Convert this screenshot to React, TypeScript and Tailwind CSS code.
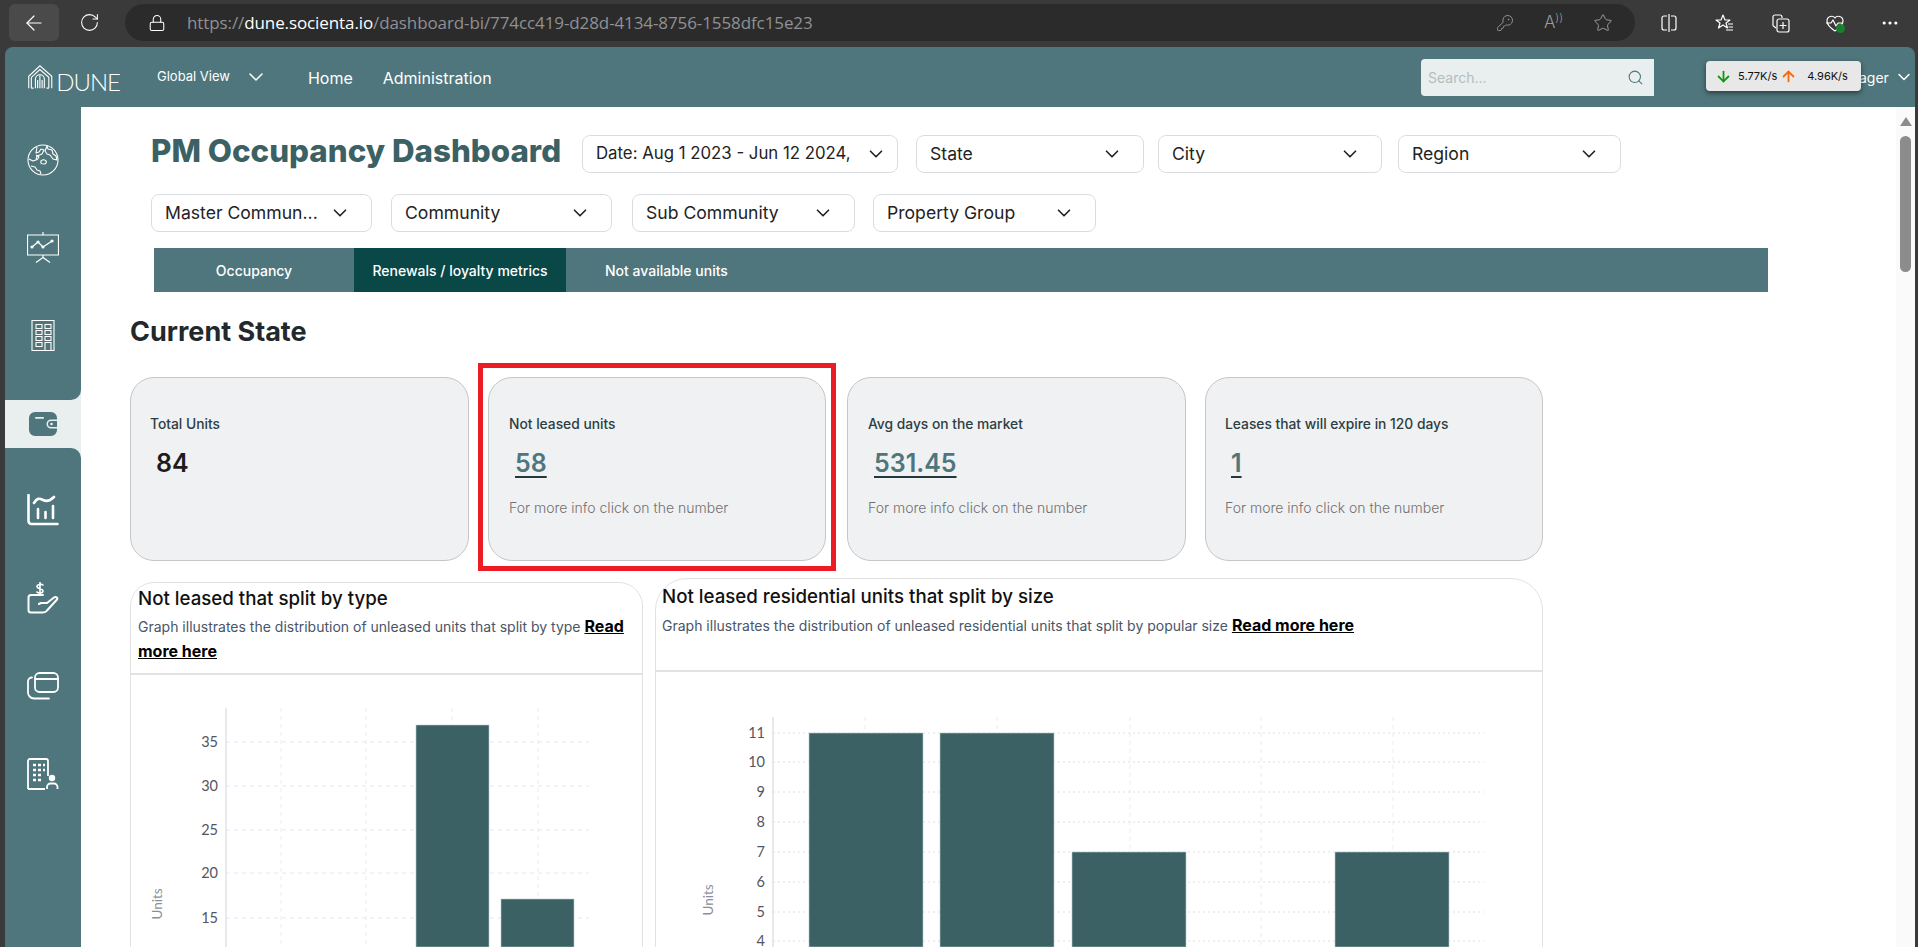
import { ArrowDown, ArrowLeft, ArrowUp, ChevronDown, Ellipsis, KeyRound, Lock, RotateCw, Search, Star } from 'lucide-react';

const TEAL = '#4f767c';
const BAR = '#3b6165';

function Select({ label, className }: { label: string; className: string }) {
  return (
    <div className={`flex h-[38px] shrink-0 items-center justify-between rounded-lg border border-[#d9dde2] bg-white pl-[13px] pr-[20px] text-[17.6px] text-[#222] ${className}`}>
      <span className="truncate">{label}</span>
      <ChevronDown className="ml-1 h-[22px] w-[22px] shrink-0 text-[#222]" strokeWidth={1.8} />
    </div>
  );
}

function StatCard({ label, value, linked, className }: { label: string; value: string; linked?: boolean; className: string }) {
  return (
    <div className={`h-[184px] shrink-0 rounded-[24px] border border-[#c6c6c6] bg-[#f0f1f3] pt-[37px] ${className}`}>
      <div className="text-[13.8px] font-medium leading-[18px] text-[#2c3e42]">{label}</div>
      {linked ? (
        <a className="ml-[6px] mt-[15px] inline-block text-[25px] font-semibold leading-[30px] text-[#4f767c] underline decoration-[#23393c] underline-offset-4">{value}</a>
      ) : (
        <div className="ml-[6px] mt-[15px] text-[25px] font-semibold leading-[30px] text-[#1c1c1c]">{value}</div>
      )}
      {linked && <div className="mt-[21px] text-[14px] font-light leading-[18px] text-[#707070]">For more info click on the number</div>}
    </div>
  );
}

function Chart({ box, ticks, tickX, axisX, axisTop, gridEnd, vLines, bars, unitsX, unitsY, dotted }: {
  box: string;
  ticks: [string, number][];
  tickX: number;
  axisX: number;
  axisTop: number;
  gridEnd: number;
  vLines: number[];
  bars: [number, number, number][];
  unitsX: number;
  unitsY: number;
  dotted?: boolean;
}) {
  return (
    <svg viewBox={box} className="block h-full w-full" fontFamily="Lato, sans-serif">
      {vLines.map((x) => (
        <line key={x} x1={x} x2={x} y1={axisTop} y2={947} stroke="#ececf0" strokeDasharray="4 4" />
      ))}
      {ticks.map(([t, y]) => (
        <g key={t}>
          <line x1={axisX} x2={gridEnd} y1={y} y2={y} stroke={dotted ? '#dfdfe3' : '#e8e8ec'} strokeDasharray={dotted ? '2 3' : '4 4'} />
          <text x={tickX} y={y + 5} textAnchor="end" fontSize="14.5" fill="#55555f">{t}</text>
        </g>
      ))}
      <line x1={axisX} x2={axisX} y1={axisTop} y2={947} stroke="#e0e0ea" strokeWidth="1.5" />
      {bars.map(([x, w, y]) => (
        <rect key={x} x={x} y={y} width={w} height={947 - y} fill={BAR} stroke="#b9cccd" strokeWidth="0.6" />
      ))}
      <text transform={`translate(${unitsX} ${unitsY}) rotate(-90)`} textAnchor="middle" fontSize="13.5" fill="#8b8f9a">Units</text>
    </svg>
  );
}

function Logo() {
  return (
    <div className="flex h-[32px] w-[92px] items-end text-white">
      <svg viewBox="0 0 34 32" className="h-[32px] w-[34px]" fill="none" stroke="currentColor" strokeWidth="1.5">
        <path d="M1 31V15L16 1l16 14v16" />
        <path d="M4.5 31V16.5L16 6l12 10.5V31" />
        <path d="M10 31V19a6 6 0 0 1 12 0v12M13 31V20M16 31V14M19 31V20" />
        <path d="M4.5 31h3M25 31h3" />
      </svg>
      <span className="ml-[3px] text-[24px] font-light leading-[22px] tracking-[-1px]" style={{ fontFamily: 'Lato, sans-serif' }}>DUNE</span>
    </div>
  );
}

const navIcon = 'h-[32px] w-[32px] text-white';

function GlobeIcon() {
  return (
    <svg viewBox="0 0 32 32" className={navIcon} fill="none" stroke="currentColor" strokeWidth="1.1" strokeLinejoin="round">
      <circle cx="16" cy="16" r="15" />
      <path d="M2 15l4 2 3-1 1-4 5-2 2-4-3-1-2 3-3 1 1-6" />
      <path d="M20 2l1 3 4 1 1 4 3 2 1 4-4-1-3-4-3-1-2-3z" />
      <path d="M4 22l4 1 2 3 3 1 1 3" />
      <path d="M14 17c2-2 4-1 5 0s0 3-2 3-4 0-3-3zM9 11l3 2-2 3" />
    </svg>
  );
}

function BoardIcon() {
  return (
    <svg viewBox="0 0 32 32" className={navIcon} fill="none" stroke="currentColor" strokeWidth="1.2" strokeLinejoin="round">
      <path d="M16 0v3M0.5 3h31v20H.5zM16 23v3M9 30.500l7-5 7 5" />
      <path d="M5 15l6-5 5 5 9-6" />
      <circle cx="5" cy="15" r="1" fill="currentColor" />
      <circle cx="11" cy="10" r="1" fill="currentColor" />
      <circle cx="16" cy="15" r="1" fill="currentColor" />
      <circle cx="25" cy="9" r="1" fill="currentColor" />
    </svg>
  );
}

function BuildingIcon() {
  return (
    <svg viewBox="0 0 32 32" className={navIcon} fill="none" stroke="currentColor" strokeWidth="1.1">
      <path d="M5 .5h22v30H5z" />
      <path d="M9 4.500h6v4H9zM18 4.500h6v4h-6zM9 10.500h6v4H9zM18 10.500h6v4h-6zM9 16.500h6v4H9zM18 16.500h6v4h-6zM9 22.500h6v4H9zM18 22.500h6v8h-6z" />
    </svg>
  );
}

function WalletIcon() {
  return (
    <svg viewBox="0 0 28 24" className="h-[24px] w-[28px]">
      <path fill={TEAL} d="M6 0h16a6 6 0 0 1 6 6v1.500h-6a4.500 4.500 0 0 0 0 9h6V18a6 6 0 0 1-6 6H6a6 6 0 0 1-6-6V6a6 6 0 0 1 6-6z" />
      <path fill={TEAL} d="M22 9h6v6h-6a3 3 0 0 1 0-6z" />
      <rect x="6" y="5" width="9" height="1.800" rx="0.900" fill="#e9efef" />
      <circle cx="22.500" cy="12" r="1.300" fill="#e9efef" />
    </svg>
  );
}

function StatsIcon() {
  return (
    <svg viewBox="0 0 32 32" className={navIcon} fill="none" stroke="currentColor" strokeWidth="2.600" strokeLinecap="round" strokeLinejoin="round">
      <path d="M1.500 1v26a3 3 0 0 0 3 3h26" />
      <path d="M7 9c3-5 5-5 9-3s7 1 11-3M11 15v9M18.500 18v6M26 12v12" />
    </svg>
  );
}

function HandIcon() {
  return (
    <svg viewBox="0 0 32 32" className={navIcon} fill="none" stroke="currentColor" strokeWidth="2" strokeLinecap="round" strokeLinejoin="round">
      <path d="M16 13H4a2.500 2.500 0 0 0-2.500 2.500V28A2.500 2.500 0 0 0 4 30.500h12c2 0 3-.5 4-2l10-11c1-1.500-1-3.500-3-2l-7 5.500h-6l-2 1" />
      <path d="M16 3c-1-1-6-1-6 1.500S16 6.500 16 9c0 2.500-5 2.500-6 1M13 0v13" strokeWidth="1.600" />
    </svg>
  );
}

function CardsIcon() {
  return (
    <svg viewBox="0 0 32 28" className="h-[28px] w-[32px] text-white" fill="none" stroke="currentColor" strokeWidth="1.800" strokeLinecap="round" strokeLinejoin="round">
      <rect x="8" y="1" width="23" height="19" rx="4.500" />
      <path d="M8 7h23M5 5.500A4 4 0 0 0 1 9.500v11A6 6 0 0 0 7 26.500h15" />
    </svg>
  );
}

function TenantIcon() {
  return (
    <svg viewBox="0 0 32 32" className={navIcon} fill="none" stroke="currentColor" strokeWidth="1.800">
      <path d="M1 31V3a2 2 0 0 1 2-2h16a2 2 0 0 1 2 2v15M1 31h17" />
      <path d="M6 7h3M11 7h3M16 7h2M6 12h3M11 12h3M16 12h2M6 17h3M11 17h3M6 22h3M11 22h3" strokeWidth="2.400" />
      <circle cx="25" cy="20" r="3.200" fill="currentColor" stroke="none" />
      <path d="M20 31v-2a3.500 3.500 0 0 1 3.500-3.500h3.500a3.500 3.500 0 0 1 3.500 3.500v2" />
    </svg>
  );
}

function SplitIcon() {
  return (
    <svg viewBox="0 0 20 20" className="h-5 w-5 text-white" fill="none" stroke="currentColor" strokeWidth="1.200">
      <path d="M8 3H5a2 2 0 0 0-2 2v10a2 2 0 0 0 2 2h3M12 3h3a2 2 0 0 1 2 2v10a2 2 0 0 1-2 2h-3M10 1v18" />
    </svg>
  );
}

function FavIcon() {
  return (
    <svg viewBox="0 0 20 20" className="h-5 w-5 text-white" fill="none" stroke="currentColor" strokeWidth="1.200" strokeLinejoin="round">
      <path d="M9 2l2 5h5l-4 3 1.500 5L9 12l-4.500 3L6 10 2 7h5zM14 11h5M14.500 14h4.500M12 17h7" />
    </svg>
  );
}

function CollectIcon() {
  return (
    <svg viewBox="0 0 20 20" className="h-5 w-5 text-white" fill="none" stroke="currentColor" strokeWidth="1.200">
      <path d="M6 15l-2.500-2a2 2 0 0 1-.5-2V4a2 2 0 0 1 2-2h5a2 2 0 0 1 2 2v1" />
      <rect x="7" y="6" width="12" height="13" rx="2" />
      <path d="M13 9v7M9.500 12.500h7" />
    </svg>
  );
}

function HeartIcon() {
  return (
    <div className="relative h-5 w-5 text-white">
      <svg viewBox="0 0 20 20" className="h-5 w-5" fill="none" stroke="currentColor" strokeWidth="1.200" strokeLinejoin="round">
        <path d="M10 5c-2-3-8-2-8 3 0 3 2 6 8 10 6-4 8-7 8-10 0-5-6-6-8-3zM1 10h5l2-3 3 6 2-3h5" />
      </svg>
      <span className="absolute bottom-0 right-0 h-[9px] w-[9px] rounded-full bg-[#1a7f2e]" />
    </div>
  );
}

export default function App() {
  return (
    <div className="relative flex h-[947px] w-[1918px] flex-col overflow-hidden bg-[#3a3a3a]" style={{ fontFamily: 'Inter, sans-serif' }}>
      {/* browser toolbar */}
      <div className="flex h-[47px] shrink-0 items-start pl-[9px] pt-[4px]">
        <div className="flex h-[37px] w-[50px] items-center justify-center rounded-md bg-[#4a4a4a]">
          <ArrowLeft className="h-6 w-6 text-white" strokeWidth={1.2} />
        </div>
        <div className="flex h-[37px] w-[66px] items-center pl-[20px]">
          <RotateCw className="h-[21px] w-[21px] text-white" strokeWidth={1.2} />
        </div>
        <div className="flex h-[37px] w-[1510px] items-center rounded-full bg-[#2b2b2b] pl-[23px] pr-[22px]">
          <Lock className="h-[18px] w-[18px] text-white" strokeWidth={1.4} />
          <span className="ml-[21px] flex-1 text-[17px] tracking-[-0.1px] text-[#8f9194]" style={{ fontFamily: '"Open Sans", sans-serif' }}>
            https://<span className="text-white">dune.socienta.io</span>/dashboard-bi/774cc419-d28d-4134-8756-1558dfc15e23
          </span>
          <KeyRound className="h-[18px] w-[18px] text-[#9a9a9a]" strokeWidth={1.2} />
          <span className="ml-[30px] text-[17px] font-light text-[#9a9a9a]">A<span className="text-[11px] align-super">))</span></span>
          <Star className="ml-[30px] h-5 w-5 text-[#9a9a9a]" strokeWidth={1.2} />
        </div>
        <div className="flex h-[37px] flex-1 items-center justify-between pl-[24px] pr-[18px]">
          <SplitIcon />
          <FavIcon />
          <CollectIcon />
          <HeartIcon />
          <Ellipsis className="h-5 w-5 text-white" strokeWidth={1.800} />
        </div>
      </div>

      {/* app */}
      <div className="ml-[5px] mr-[3px] flex min-h-0 flex-1 flex-col overflow-hidden rounded-t-lg bg-[#4f767c]">
        <header className="flex h-[60px] shrink-0 items-center pl-[23px] text-white">
          <Logo />
          <div className="ml-[37px] text-[13px]">Global View</div>
          <ChevronDown className="ml-[14px] h-6 w-6" strokeWidth={1.500} />
          <nav className="ml-[40px] mt-[2px] flex gap-[30px] text-[16px]">
            <span>Home</span>
            <span>Administration</span>
          </nav>
          <div className="ml-auto flex h-[37px] w-[233px] items-center justify-between rounded-l bg-[#e9efef] pl-[7px] pr-[10px] text-[14px] text-[#b7bcbc]">
            <span>Search...</span>
            <Search className="h-[17px] w-[17px] text-[#4f767c]" strokeWidth={1.500} />
          </div>
          <span className="ml-[205px] w-[27px] text-right text-[14px]">ager</span>
          <ChevronDown className="ml-[8px] mr-[1px] h-5 w-5 shrink-0" strokeWidth={1.800} />
        </header>

        <div className="flex min-h-0 flex-1">
          <aside className="flex w-[76px] shrink-0 flex-col pt-[9px]">
            <div className="flex h-[88px] items-center justify-center"><GlobeIcon /></div>
            <div className="flex h-[88px] items-center justify-center"><BoardIcon /></div>
            <div className="flex h-[88px] items-center justify-center"><BuildingIcon /></div>
            <div className="relative mt-[20px] flex h-[48px] items-center justify-center bg-[#e9efef]">
              <div className="absolute -top-[10px] right-0 h-[10px] w-[10px] bg-[#e9efef]"><div className="h-full w-full rounded-br-[10px] bg-[#4f767c]" /></div>
              <WalletIcon />
              <div className="absolute -bottom-[10px] right-0 h-[10px] w-[10px] bg-[#e9efef]"><div className="h-full w-full rounded-tr-[10px] bg-[#4f767c]" /></div>
            </div>
            <div className="mt-[18px] flex h-[88px] items-center justify-center"><StatsIcon /></div>
            <div className="flex h-[88px] items-center justify-center"><HandIcon /></div>
            <div className="flex h-[88px] items-center justify-center"><CardsIcon /></div>
            <div className="flex h-[88px] items-center justify-center"><TenantIcon /></div>
          </aside>

          <main className="min-w-0 flex-1 overflow-hidden bg-white">
            <div className="ml-[70px] mt-[28px] flex items-center">
              <h1 className="mb-[6px] w-[431px] shrink-0 text-[31.300px] font-extrabold leading-[32px] text-[#3b6165]">PM Occupancy Dashboard</h1>
              <Select label="Date: Aug 1 2023 - Jun 12 2024," className="w-[316px] !pr-[10px] !text-[16.800px]" />
              <Select label="State" className="ml-[18px] w-[228px]" />
              <Select label="City" className="ml-[14px] w-[224px]" />
              <Select label="Region" className="ml-[16px] w-[223px]" />
            </div>
            <div className="ml-[70px] mt-[21px] flex items-center">
              <Select label="Master Commun..." className="w-[221px]" />
              <Select label="Community" className="ml-[19px] w-[221px]" />
              <Select label="Sub Community" className="ml-[20px] w-[223px]" />
              <Select label="Property Group" className="ml-[18px] w-[223px]" />
            </div>
            <div className="ml-[73px] mt-[16px] flex h-[44px] w-[1614px] items-center bg-[#4f767c] text-[14px] font-medium text-white">
              <div className="w-[200px] text-center">Occupancy</div>
              <div className="flex h-full w-[212px] items-center justify-center bg-[#0a4747]">Renewals / loyalty metrics</div>
              <div className="ml-[39px]">Not available units</div>
            </div>
            <h2 className="ml-[49px] mt-[24px] text-[27px] font-bold leading-[32px] text-[#22282b]">Current State</h2>

            <div className="ml-[49px] mt-[29px] flex gap-[19px]">
              <StatCard label="Total Units" value="84" className="w-[339px] pl-[19px]" />
              <div className="relative">
                <StatCard label="Not leased units" value="58" linked className="w-[338px] pl-[20px]" />
                {/* highlight drawn over the screenshot */}
                <div className="absolute -bottom-[10px] -left-[10px] -right-[10px] -top-[14px] border-[5px] border-[#ed1c24]" />
              </div>
              <StatCard label="Avg days on the market" value="531.45" linked className="ml-[2px] w-[339px] pl-[20px]" />
              <StatCard label="Leases that will expire in 120 days" value="1" linked className="w-[338px] pl-[19px]" />
            </div>

            <div className="ml-[49px] mt-[17px] flex items-start gap-[12px]">
              <section className="mt-[4px] h-[400px] w-[513px] shrink-0 rounded-t-[24px] border border-[#e2e2e2] bg-white">
                <div className="h-[92px] border-b-2 border-[#e2e2e2] px-[7px] pt-[3px]">
                  <h3 className="text-[18.700px] font-medium leading-[26px] text-[#111]">Not leased that split by type</h3>
                  <p className="mt-[2px] text-[14px] leading-[25px] text-[#4a5568]">
                    Graph illustrates the distribution of unleased units that split by type <a className="text-[16px] font-bold leading-[25px] text-black underline">Read more here</a>
                  </p>
                </div>
                <div className="h-[272px]">
                  <Chart
                    box="131 675 511 272"
                    ticks={[['35', 742], ['30', 786], ['25', 830], ['20', 873], ['15', 918]]}
                    tickX={218}
                    axisX={226}
                    axisTop={708}
                    gridEnd={589}
                    vLines={[281, 366, 452, 538]}
                    bars={[[416, 73, 725], [501, 73, 899]]}
                    unitsX={162}
                    unitsY={904}
                  />
                </div>
              </section>
              <section className="h-[404px] w-[888px] shrink-0 rounded-t-[32px] border border-[#e2e2e2] bg-white">
                <div className="h-[93px] border-b-2 border-[#e2e2e2] px-[6px] pt-[5px]">
                  <h3 className="text-[18.700px] font-medium leading-[26px] text-[#111]">Not leased residential units that split by size</h3>
                  <p className="mt-[3px] text-[14px] leading-[25px] text-[#4a5568]">
                    Graph illustrates the distribution of unleased residential units that split by popular size <a className="text-[16px] font-bold leading-[25px] text-black underline">Read more here</a>
                  </p>
                </div>
                <div className="h-[275px]">
                  <Chart
                    box="656 672 886 275"
                    ticks={[['11', 733], ['10', 762], ['9', 792], ['8', 822], ['7', 852], ['6', 882], ['5', 912], ['4', 941]]}
                    tickX={765}
                    axisX={773}
                    axisTop={717}
                    gridEnd={1484}
                    vLines={[865, 997, 1130, 1261, 1393]}
                    bars={[[809, 114, 733], [940, 114, 733], [1072, 114, 852], [1335, 114, 852]]}
                    unitsX={713}
                    unitsY={900}
                    dotted
                  />
                </div>
              </section>
            </div>
          </main>

          {/* scrollbar */}
          <div className="flex w-[19px] shrink-0 flex-col items-center bg-[#fafafa] pt-[10px]">
            <div className="h-0 w-0 border-x-[6px] border-b-[9px] border-x-transparent border-b-[#8c8c8c]" />
            <div className="mt-[10px] h-[136px] w-[11px] rounded-full bg-[#8c8c8c]" />
          </div>
        </div>
      </div>

      {/* download / upload speed widget from the OS */}
      <div className="absolute left-[1706px] top-[61px] flex h-[30px] w-[155px] items-center rounded bg-[#e8e8e8] pl-[9px] text-[11px] text-[#111] shadow-[0_2px_5px_rgba(0,0,0,0.5)]">
        <ArrowDown className="h-[17px] w-[17px] text-[#0a9a0a]" strokeWidth={2.500} />
        <span className="ml-[6px]">5.77K/s</span>
        <ArrowUp className="ml-[3px] h-[17px] w-[17px] text-[#f06a10]" strokeWidth={2.500} />
        <span className="ml-[10px]">4.96K/s</span>
      </div>
    </div>
  );
}
